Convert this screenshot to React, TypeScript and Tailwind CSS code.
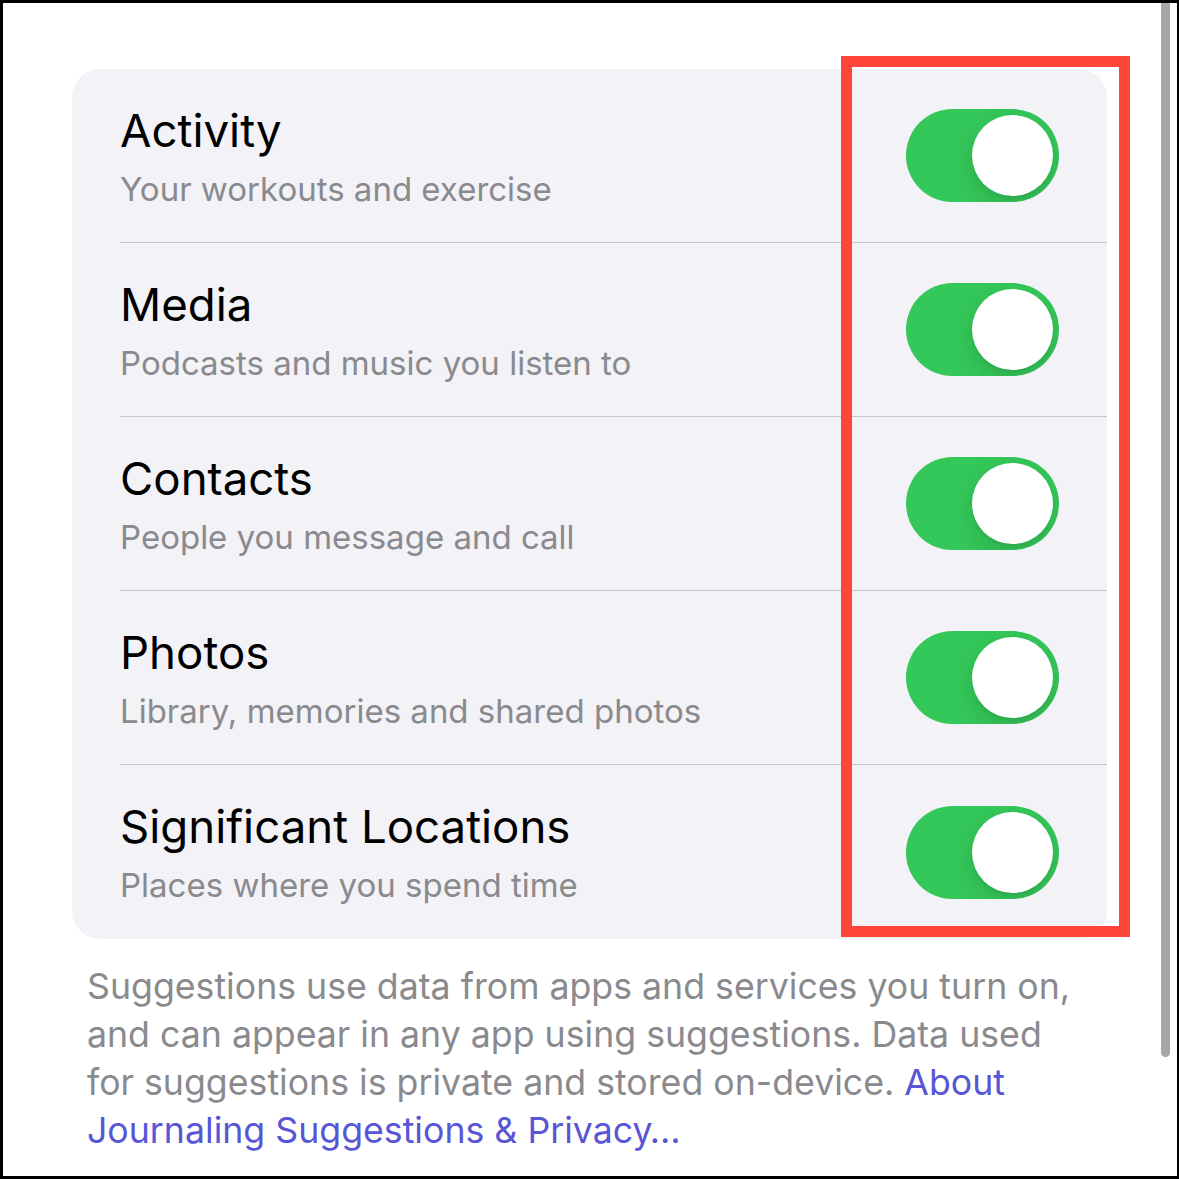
import React from "react";

const rows = [
  { title: "Activity", sub: "Your workouts and exercise" },
  { title: "Media", sub: "Podcasts and music you listen to" },
  { title: "Contacts", sub: "People you message and call" },
  { title: "Photos", sub: "Library, memories and shared photos" },
  { title: "Significant Locations", sub: "Places where you spend time" },
];

function Toggle() {
  return (
    <div className="relative w-[153px] h-[93px] shrink-0 rounded-full bg-[#34c759] overflow-hidden">
      <div className="absolute right-[6px] top-[6px] w-[81px] h-[81px] rounded-full bg-white shadow-[0_9px_24px_rgba(0,0,0,0.13),0_3px_3px_rgba(0,0,0,0.05)]" />
    </div>
  );
}

export default function App() {
  return (
    <div
      className="relative w-[1179px] h-[1179px] bg-white border-l-[3px] border-t-[3px] border-r-2 border-b-[3px] border-black overflow-hidden"
      style={{ fontFamily: "Inter, 'Noto Sans', sans-serif" }}
    >
      <div className="pl-[69px] pt-[66px]">
        <div className="w-[1035px] rounded-[28px] bg-[#f2f2f7]">
          {rows.map((r, i) => (
            <div key={r.title} className="pl-[48px] h-[174px]">
              <div
                className={
                  "h-full flex items-center justify-between pr-[48px] " +
                  (i < rows.length - 1 ? "border-b border-[#c6c6c8]" : "")
                }
              >
                <div className="flex flex-col">
                  <div className="text-[45.6px] leading-[56px] text-black">{r.title}</div>
                  <div className="mt-[10px] text-[33px] leading-[40px] text-[#8a8a8e]">{r.sub}</div>
                </div>
                <Toggle />
              </div>
            </div>
          ))}
        </div>
        <div className="pl-[15px] pt-[23px] w-[1016px] text-[35.7px] leading-[48px] text-[#8a8a8e]">
          Suggestions use data from apps and services you turn on, and can appear in any app using
          suggestions. Data used for suggestions is private and stored on-device.{" "}
          <span className="text-[#5856d6]">About Journaling Suggestions &amp; Privacy…</span>
        </div>
      </div>
      <div className="absolute left-[838px] top-[53px] w-[289px] h-[881px] border-[11px] border-[#ff443a]" />
      <div className="absolute left-[1158px] top-[-10px] w-[9px] h-[1064px] rounded-full bg-[#a6a6a6]" />
    </div>
  );
}
